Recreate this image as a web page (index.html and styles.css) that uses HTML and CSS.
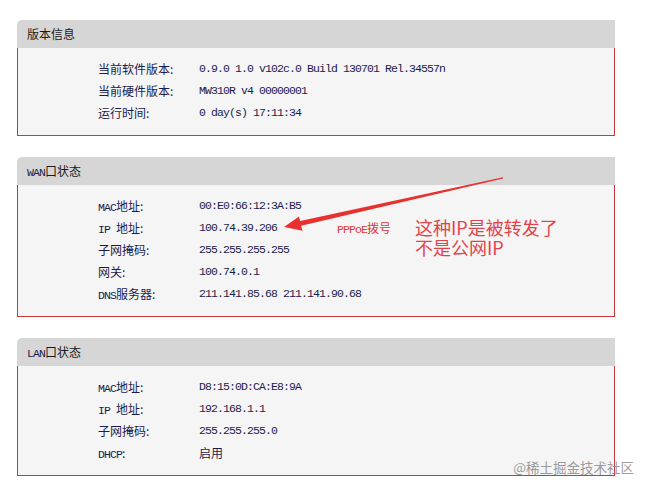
FILE: index.html
```html
<!DOCTYPE html>
<html lang="zh-CN">
<head>
<meta charset="utf-8">
<title>运行状态</title>
<link rel="stylesheet" href="styles.css">
</head>
<body>
<div class="page">
  <section class="panel">
    <div class="panel-head">版本信息</div>
    <div class="panel-body">
      <div class="row"><span class="label">当前软件版本:</span><span class="val">0.9.0 1.0 v102c.0 Build 130701 Rel.34557n</span></div>
      <div class="row"><span class="label">当前硬件版本:</span><span class="val">MW310R v4 00000001</span></div>
      <div class="row"><span class="label">运行时间:</span><span class="val">0 day(s) 17:11:34</span></div>
    </div>
  </section>

  <section class="panel">
    <div class="panel-head"><span class="lat">WAN</span>口状态</div>
    <div class="panel-body">
      <div class="row"><span class="label"><span class="lat">MAC</span>地址:</span><span class="val">00:E0:66:12:3A:B5</span></div>
      <div class="row"><span class="label"><span class="lat">IP </span>地址:</span><span class="val">100.74.39.206</span></div>
      <div class="row"><span class="label">子网掩码:</span><span class="val">255.255.255.255</span></div>
      <div class="row"><span class="label">网关:</span><span class="val">100.74.0.1</span></div>
      <div class="row"><span class="label"><span class="lat">DNS</span>服务器:</span><span class="val">211.141.85.68 211.141.90.68</span></div>
    </div>
  </section>

  <section class="panel">
    <div class="panel-head"><span class="lat">LAN</span>口状态</div>
    <div class="panel-body">
      <div class="row"><span class="label"><span class="lat">MAC</span>地址:</span><span class="val">D8:15:0D:CA:E8:9A</span></div>
      <div class="row"><span class="label"><span class="lat">IP </span>地址:</span><span class="val">192.168.1.1</span></div>
      <div class="row"><span class="label">子网掩码:</span><span class="val">255.255.255.0</span></div>
      <div class="row"><span class="label"><span class="lat">DHCP</span>:</span><span class="val"><span class="cjk">启用</span></span></div>
    </div>
  </section>

  <svg class="arrow" width="649" height="489" viewBox="0 0 649 489" aria-hidden="true">
    <polygon points="284,227 299,216.5 300.1,220.9 503,177.2 503,178.6 301.1,225.7 302.6,230.8" fill="#e8312e"/>
  </svg>
  <div class="note-small"><span class="lat">PPPoE</span>拨号</div>
  <div class="note-big">
    <div class="note-line">这种IP是被转发了</div>
    <div class="note-line">不是公网IP</div>
  </div>
  <div class="watermark">@稀土掘金技术社区</div>
</div>
</body>
</html>
```
FILE: styles.css
```css
html, body {
  margin: 0;
  padding: 0;
  background: #ffffff;
}

.page {
  position: relative;
  width: 649px;
  height: 489px;
  padding: 20px 0 0 17px;
  box-sizing: border-box;
  display: flex;
  flex-direction: column;
  gap: 21px;
  font-family: "Noto Sans CJK SC", sans-serif;
  font-size: 12px;
  color: #1c1c4c;
}

.lat {
  font-family: "Liberation Mono", monospace;
  font-size: 11.5px;
  letter-spacing: -0.9px;
}

.panel {
  width: 598px;
}

.panel-head {
  height: 28px;
  line-height: 28px;
  padding-left: 10px;
  background: #d6d6d6;
  border-top-left-radius: 5px;
  color: #1a1a1a;
}

.panel-head .lat {
  color: #1c1c4c;
}

.panel-body {
  background: #f5f5f5;
  border: 1px solid #c9393a;
  border-top: none;
  padding: 10px 0 11px 80px;
}

.row {
  display: grid;
  grid-template-columns: 101px 1fr;
  height: 22px;
  line-height: 22px;
  white-space: nowrap;
}

.val {
  font-family: "Liberation Mono", monospace;
  font-size: 11.5px;
  letter-spacing: -0.9px;
}

.val .cjk {
  font-family: "Noto Sans CJK SC", sans-serif;
  font-size: 12px;
  letter-spacing: 0;
}

.arrow {
  position: absolute;
  left: 0;
  top: 0;
  pointer-events: none;
}

.note-small {
  position: absolute;
  left: 337px;
  top: 218px;
  line-height: 20px;
  color: #e03a3a;
  font-size: 12px;
}

.note-big {
  position: absolute;
  left: 415px;
  top: 217px;
  font-size: 18px;
  color: #e2434b;
  display: flex;
  flex-direction: column;
}

.note-line {
  height: 20px;
  line-height: 20px;
  white-space: nowrap;
}

.watermark {
  position: absolute;
  right: 15px;
  top: 457px;
  font-size: 13.5px;
  line-height: 20px;
  color: rgba(130, 130, 130, 0.8);
}
```
